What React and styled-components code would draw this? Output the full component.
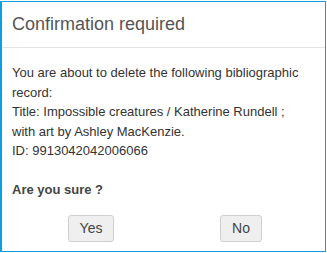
import React from 'react';
import styled, { createGlobalStyle } from 'styled-components';

const GlobalStyle = createGlobalStyle`
  html, body {
    margin: 0;
    padding: 0;
    background: #fff;
  }
  body {
    padding-top: 1px;
    font-family: "Liberation Sans", Arial, sans-serif;
  }
`;

const Dialog = styled.div`
  box-sizing: border-box;
  width: 326px;
  height: 251px;
  border: 1px solid #0e9fdf;
  border-left-width: 2px;
  background: #fff;
  display: flex;
  flex-direction: column;
`;

const Header = styled.div`
  height: 46px;
  box-sizing: border-box;
  padding: 10px 10px 0 10px;
  border-bottom: 1px solid #e5e5e5;
`;

const Title = styled.h3`
  margin: 0;
  font-size: 18px;
  font-weight: normal;
  line-height: 24px;
  color: #555;
`;

const Body = styled.div`
  padding: 15px 12px 9px 10px;
  font-size: 13px;
  line-height: 19.5px;
  color: #333;
`;

const Message = styled.p`
  margin: 0 0 19.5px 0;
  max-width: 292px;
`;

const Question = styled.p`
  margin: 0;
  font-weight: bold;
  color: #444;
`;

const ButtonRow = styled.div`
  display: grid;
  grid-template-columns: repeat(2, 150px);
  justify-content: center;
  padding-left: 7px;
  margin-top: 15px;
`;

const Cell = styled.div`
  display: flex;
  justify-content: center;
`;

const Button = styled.button`
  box-sizing: border-box;
  height: 27px;
  padding: 0 11px;
  font-family: "Liberation Sans", Arial, sans-serif;
  font-size: 14px;
  color: #444;
  background: #efefef;
  border: 1px solid #cfcfcf;
  border-radius: 3px;
  cursor: pointer;
`;

export default function App() {
  return (
    <>
      <GlobalStyle />
      <Dialog>
        <Header>
          <Title>Confirmation required</Title>
        </Header>
        <Body>
          <Message>
            You are about to delete the following bibliographic record:
            <br />
            Title: Impossible creatures / Katherine Rundell ; with art by Ashley MacKenzie.
            <br />
            ID: 9913042042006066
          </Message>
          <Question>Are you sure ?</Question>
          <ButtonRow>
            <Cell><Button>Yes</Button></Cell>
            <Cell><Button>No</Button></Cell>
          </ButtonRow>
        </Body>
      </Dialog>
    </>
  );
}
